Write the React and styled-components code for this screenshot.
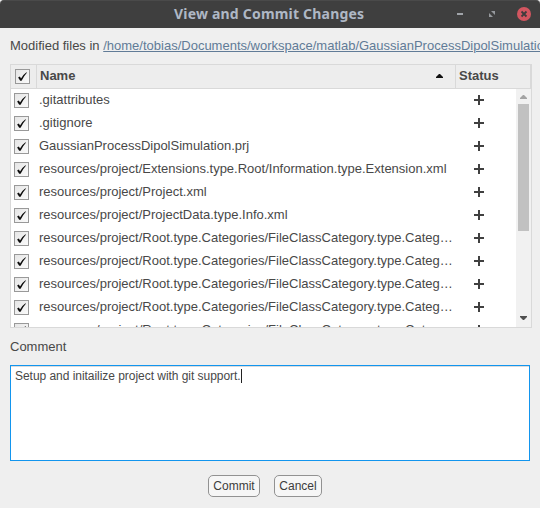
import React from "react";
import styled, { createGlobalStyle } from "styled-components";

const GlobalStyle = createGlobalStyle`
  * { box-sizing: border-box; }
  body { margin: 0; background: #efefef; overflow: hidden; }
`;

const Dialog = styled.div`
  width: 540px;
  height: 508px;
  overflow: hidden;
  background: #efefef;
  color: #484848;
  font: 13px/15px "Liberation Sans", Arial, sans-serif;
  display: flex;
  flex-direction: column;
`;

const TitleBar = styled.header`
  height: 28px;
  flex: none;
  display: grid;
  grid-template-columns: 80px 1fr 96px;
  align-items: center;
  background: #3f3f3f;
  border-top: 1px solid #4a4a4a;
  border-radius: 4px 4px 0 0;
`;

const Title = styled.h1`
  grid-column: 2;
  margin: 0 0 2px 94px;
  color: #afb8c5;
  font: bold 14px/24px "Noto Sans", sans-serif;
  letter-spacing: 0.2px;
  white-space: nowrap;
`;

const WindowControls = styled.div`
  display: flex;
  align-items: center;
  padding-left: 8px;
  gap: 16px;
  margin-top: -1px;
`;

const ControlIcon = styled.svg`
  display: block;
  width: 16px;
  height: 16px;
  flex: none;
`;

const Content = styled.main`
  flex: 1;
  display: flex;
  flex-direction: column;
  padding: 10px 8px 0 10px;
`;

const PathLine = styled.div`
  height: 26px;
  flex: none;
  white-space: nowrap;
`;

const PathLink = styled.a`
  color: #617b97;
  text-decoration: underline;
`;

const Table = styled.section`
  width: 522px;
  height: 264px;
  flex: none;
  display: flex;
  flex-direction: column;
  border: 1px solid #d9d9d9;
  background: #fff;
`;

const HeaderRow = styled.div`
  height: 24px;
  flex: none;
  display: grid;
  grid-template-columns: 26px 419px 1fr;
  background: #ededed;
  border-bottom: 1px solid #d9d9d9;
  font-weight: bold;
`;

const HeaderCell = styled.div`
  display: flex;
  align-items: center;
  justify-content: space-between;
  padding: 0 12px 2px 3px;
  border-right: 1px solid #d9d9d9;
`;

const HeaderCheckCell = styled(HeaderCell)`
  padding: 0 0 0 4px;
`;

const Body = styled.div`
  flex: 1;
  min-height: 0;
  display: flex;
`;

const Rows = styled.div`
  flex: 1;
  min-width: 0;
  overflow: hidden;
`;

const Row = styled.div`
  height: 23px;
  display: grid;
  grid-template-columns: 28px 416px 1fr;
  align-items: center;
`;

const CheckCell = styled.div`
  padding-left: 3px;
`;

const FileName = styled.div`
  overflow: hidden;
  text-overflow: ellipsis;
  white-space: nowrap;
  padding-bottom: 2px;
`;

const StatusIcon = styled.svg`
  display: block;
  margin: 0 0 2px 19px;
  width: 10px;
  height: 10px;
`;

const Box = styled.span`
  display: flex;
  width: 15px;
  height: 15px;
  border: 1px solid #999;
  background: linear-gradient(135deg, #e6e6e6, #fafafa);
`;

const Scrollbar = styled.div`
  width: 15px;
  flex: none;
  display: flex;
  flex-direction: column;
  justify-content: space-between;
  background: #f1f1f1;
  padding: 6px 0 7px;
`;

const ScrollArrow = styled.svg`
  display: block;
  margin-left: 4px;
  width: 7px;
  height: 4px;
`;

const Thumb = styled.div`
  width: 11px;
  height: 127px;
  margin: 5px 0 auto 2px;
  background: #c1c1c1;
`;

const Label = styled.label`
  margin: 11px 0;
  line-height: 15px;
`;

const CommentField = styled.div`
  width: 520px;
  height: 96px;
  flex: none;
  padding: 3px 4px;
  border: 1px solid #1295ee;
  background: #fff;
  box-shadow: inset 0 1px 0 #dcdcdc;
  font-size: 12px;
  line-height: 14px;
`;

const CommentText = styled.span`
  letter-spacing: -0.04px;
`;

const Caret = styled.span`
  display: inline-block;
  width: 1px;
  height: 14px;
  background: #222;
  vertical-align: top;
`;

const Actions = styled.footer`
  display: flex;
  gap: 14px;
  padding: 14px 0 0 198px;
`;

const Button = styled.button`
  width: ${({ $width }) => $width}px;
  height: 22px;
  padding: 0 0 1px;
  border: 1px solid #929292;
  border-radius: 5px;
  background: #f6f6f6;
  color: #3c3c3c;
  font: 12px "Liberation Sans", Arial, sans-serif;
`;

const category = "resources/project/Root.type.Categories/FileClassCategory.type.Category/definition.xml";
const files = [
  ".gitattributes",
  ".gitignore",
  "GaussianProcessDipolSimulation.prj",
  "resources/project/Extensions.type.Root/Information.type.Extension.xml",
  "resources/project/Project.xml",
  "resources/project/ProjectData.type.Info.xml",
  category,
  category,
  category,
  category,
  category,
];

function Checkbox() {
  return (
    <Box role="checkbox" aria-checked="true">
      <svg width="13" height="13" viewBox="0 0 13 13">
        <path d="M2.1 7.4 L3.9 6.5 L5 8.6 Q7.2 4.5 10.5 2.3 L10.9 2.8 Q7.9 6 5.6 10.7 L4.2 10.8 Z" fill="#0b0b0b" />
      </svg>
    </Box>
  );
}

export default function App() {
  return (
    <>
      <GlobalStyle />
      <Dialog>
        <TitleBar>
          <Title>View and Commit Changes</Title>
          <WindowControls>
            <ControlIcon viewBox="0 0 16 16"><path d="M5 7h6v2H5z" fill="#a0a4a9" /></ControlIcon>
            <ControlIcon viewBox="0 0 16 16">
              <path d="M7 5h4v4zM5 7v4h4z" fill="#96999d" />
            </ControlIcon>
            <ControlIcon viewBox="0 0 16 16">
              <circle cx="8" cy="8" r="7" fill="#d35660" />
              <path d="M5.5 5.5l5 5m0-5l-5 5" stroke="#403c3d" strokeWidth="1.8" />
            </ControlIcon>
          </WindowControls>
        </TitleBar>
        <Content>
          <PathLine>
            Modified files in <PathLink>/home/tobias/Documents/workspace/matlab/GaussianProcessDipolSimulation</PathLink>
          </PathLine>
          <Table>
            <HeaderRow>
              <HeaderCheckCell><Checkbox /></HeaderCheckCell>
              <HeaderCell>
                Name
                <svg width="7" height="4" viewBox="0 0 7 4"><path d="M0 4V3L3 0h1l3 3v1z" fill="#111" /></svg>
              </HeaderCell>
              <HeaderCell>Status</HeaderCell>
            </HeaderRow>
            <Body>
              <Rows>
                {files.map((name, index) => (
                  <Row key={index}>
                    <CheckCell><Checkbox /></CheckCell>
                    <FileName>{name}</FileName>
                    <StatusIcon viewBox="0 0 10 10"><path d="M4 0h2v4h4v2H6v4H4V6H0V4h4z" fill="#404040" /></StatusIcon>
                  </Row>
                ))}
              </Rows>
              <Scrollbar>
                <ScrollArrow viewBox="0 0 7 4"><path d="M0 4V3L3 0h1l3 3v1z" fill="#a3a3a3" /></ScrollArrow>
                <Thumb />
                <ScrollArrow viewBox="0 0 7 4"><path d="M0 0v1l3 3h1l3-3V0z" fill="#505050" /></ScrollArrow>
              </Scrollbar>
            </Body>
          </Table>
          <Label>Comment</Label>
          <CommentField role="textbox"><CommentText>Setup and initailize project with git support.</CommentText><Caret /></CommentField>
          <Actions>
            <Button $width={52}>Commit</Button>
            <Button $width={48}>Cancel</Button>
          </Actions>
        </Content>
      </Dialog>
    </>
  );
}
